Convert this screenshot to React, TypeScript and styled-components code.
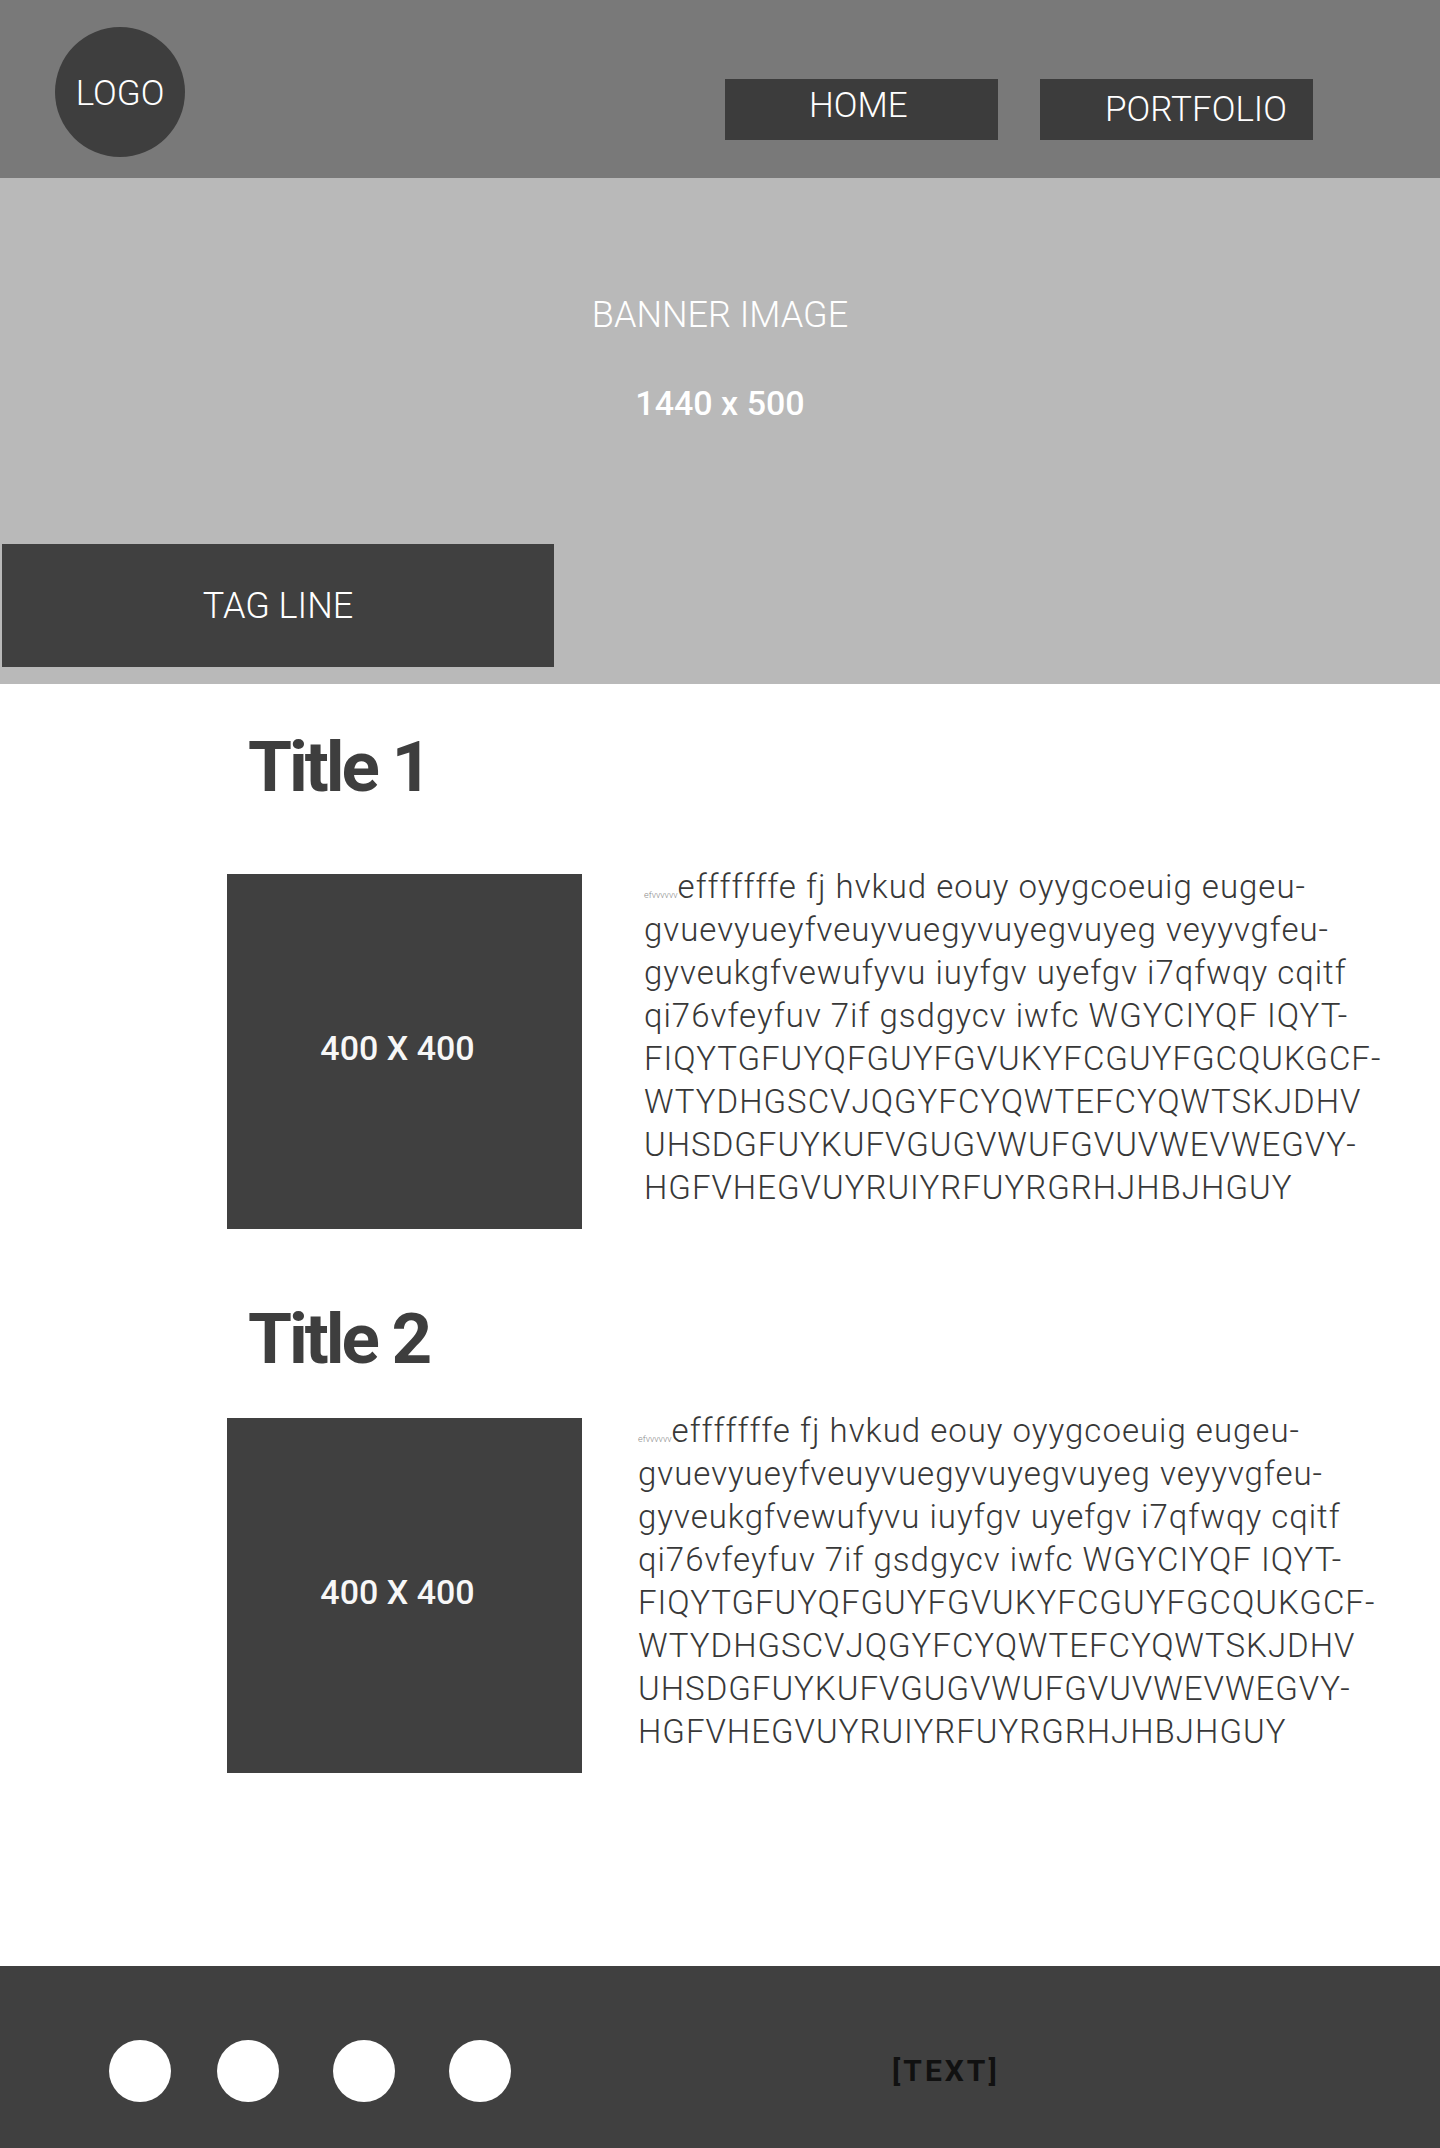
import React from "react";
import styled, { createGlobalStyle } from "styled-components";

const GlobalStyle = createGlobalStyle`
  html, body {
    margin: 0;
    padding: 0;
    background: #ffffff;
  }
  body {
    font-family: Roboto, "Liberation Sans", Arial, sans-serif;
  }
  * { box-sizing: border-box; }
`;

const Page = styled.div`
  width: 1440px;
  display: flex;
  flex-direction: column;
`;

/* ---------- Header ---------- */
const Header = styled.header`
  height: 178px;
  background: #797979;
  display: flex;
  justify-content: space-between;
  align-items: flex-start;
  padding: 27px 127px 0 55px;
`;

const Logo = styled.div`
  width: 130px;
  height: 130px;
  border-radius: 50%;
  background: #3e3e3e;
  color: #ffffff;
  display: flex;
  align-items: center;
  justify-content: center;
  font-family: Roboto, sans-serif;
  font-weight: 300;
  font-size: 35px;
  line-height: 1;
  padding-top: 2px;
`;

const Nav = styled.nav`
  display: flex;
  gap: 42px;
  padding-top: 52px;
`;

const NavButton = styled.a<{ $padLeft: number; $padTop: number }>`
  width: 273px;
  height: 61px;
  background: #3c3c3c;
  color: #ffffff;
  display: flex;
  align-items: flex-start;
  justify-content: flex-start;
  padding-left: ${(p) => p.$padLeft}px;
  padding-top: ${(p) => p.$padTop}px;
  font-family: Roboto, sans-serif;
  font-weight: 300;
  font-size: 35px;
  line-height: 36px;
  text-decoration: none;
`;

/* ---------- Banner ---------- */
const Banner = styled.section`
  height: 506px;
  background: #b9b9b9;
  display: flex;
  flex-direction: column;
  align-items: center;
  padding-top: 118px;
  padding-bottom: 17px;
`;

const BannerLabel = styled.div<{ $weight: number; $gap: number; $size: number }>`
  color: #ffffff;
  font-family: Roboto, sans-serif;
  font-size: ${(p) => p.$size}px;
  line-height: 38px;
  font-weight: ${(p) => p.$weight};
  margin-top: ${(p) => p.$gap}px;
  white-space: pre;
`;

const TagLine = styled.div`
  align-self: flex-start;
  margin-top: auto;
  margin-left: 2px;
  width: 552px;
  height: 123px;
  background: #404040;
  color: #ffffff;
  display: flex;
  align-items: center;
  justify-content: center;
  font-family: Roboto, sans-serif;
  font-weight: 300;
  font-size: 36px;
  line-height: 1;
`;

/* ---------- Content ---------- */
const Main = styled.main`
  display: flex;
  flex-direction: column;
  padding: 47px 0 193px 227px;
`;

const Title = styled.h2<{ $top: number }>`
  margin: ${(p) => p.$top}px 0 0 21px;
  height: 72px;
  font-family: Roboto, sans-serif;
  font-weight: 700;
  font-size: 71px;
  line-height: 72px;
  letter-spacing: -3px;
  color: #3e3e3e;
`;

const Row = styled.div<{ $top: number; $gap: number }>`
  display: flex;
  align-items: flex-start;
  gap: ${(p) => p.$gap}px;
  margin-top: ${(p) => p.$top}px;
`;

const ImageBox = styled.div`
  width: 355px;
  height: 355px;
  flex: none;
  background: #404040;
  color: #f7f7f7;
  display: flex;
  align-items: center;
  justify-content: center;
  padding: 0 14px 7px 0;
  font-family: Roboto, sans-serif;
  font-weight: 500;
  font-size: 34px;
  line-height: 1;
`;

const Body = styled.p`
  margin: -9px 0 0 0;
  font-family: Roboto, sans-serif;
  font-weight: 300;
  font-size: 33px;
  line-height: 43px;
  color: #383838;
  white-space: nowrap;
  letter-spacing: 1px;
`;

const Tiny = styled.span`
  font-size: 9px;
  line-height: 0;
  letter-spacing: 0;
  color: #8a8a8a;
`;

/* ---------- Footer ---------- */
const Footer = styled.footer`
  height: 182px;
  background: #404040;
  display: flex;
  align-items: center;
  padding: 28px 0 0 109px;
`;

const Socials = styled.div`
  display: flex;
  gap: 54px;
`;

const Dot = styled.span`
  width: 62px;
  height: 62px;
  border-radius: 50%;
  background: #ffffff;
  display: block;

  &:first-child {
    margin-right: -8px;
  }
`;

const FooterText = styled.div`
  margin-left: 381px;
  font-family: Roboto, sans-serif;
  font-weight: 700;
  font-size: 30px;
  line-height: 1;
  letter-spacing: 3px;
  color: #111111;
`;

const lines = [
  "efffffffe fj hvkud eouy oyygcoeuig eugeu-",
  "gvuevyueyfveuyvuegyvuyegvuyeg veyyvgfeu-",
  "gyveukgfvewufyvu iuyfgv uyefgv i7qfwqy cqitf",
  "qi76vfeyfuv 7if gsdgycv iwfc WGYCIYQF IQYT-",
  "FIQYTGFUYQFGUYFGVUKYFCGUYFGCQUKGCF-",
  "WTYDHGSCVJQGYFCYQWTEFCYQWTSKJDHV",
  "UHSDGFUYKUFVGUGVWUFGVUVWEVWEGVY-",
  "HGFVHEGVUYRUIYRFUYRGRHJHBJHGUY",
];

const Paragraph: React.FC = () => (
  <Body>
    <Tiny>efvvvvvv</Tiny>
    {lines.map((l, i) => (
      <React.Fragment key={i}>
        {l}
        {i < lines.length - 1 && <br />}
      </React.Fragment>
    ))}
  </Body>
);

const sections = [
  { title: "Title 1", titleTop: 0, rowTop: 71, gap: 62 },
  { title: "Title 2", titleTop: 74, rowTop: 43, gap: 56 },
];

export default function App() {
  return (
    <>
      <GlobalStyle />
      <Page>
        <Header>
          <Logo>LOGO</Logo>
          <Nav>
            <NavButton href="#" $padLeft={84} $padTop={9}>HOME</NavButton>
            <NavButton href="#" $padLeft={65} $padTop={13}>PORTFOLIO</NavButton>
          </Nav>
        </Header>

        <Banner>
          <BannerLabel $weight={300} $gap={0} $size={36}>BANNER IMAGE</BannerLabel>
          <BannerLabel $weight={500} $gap={50} $size={34}>1440 x 500</BannerLabel>
          <TagLine>TAG LINE</TagLine>
        </Banner>

        <Main>
          {sections.map((s) => (
            <React.Fragment key={s.title}>
              <Title $top={s.titleTop}>{s.title}</Title>
              <Row $top={s.rowTop} $gap={s.gap}>
                <ImageBox>400 X 400</ImageBox>
                <Paragraph />
              </Row>
            </React.Fragment>
          ))}
        </Main>

        <Footer>
          <Socials>
            <Dot />
            <Dot />
            <Dot />
            <Dot />
          </Socials>
          <FooterText>[TEXT]</FooterText>
        </Footer>
      </Page>
    </>
  );
}
